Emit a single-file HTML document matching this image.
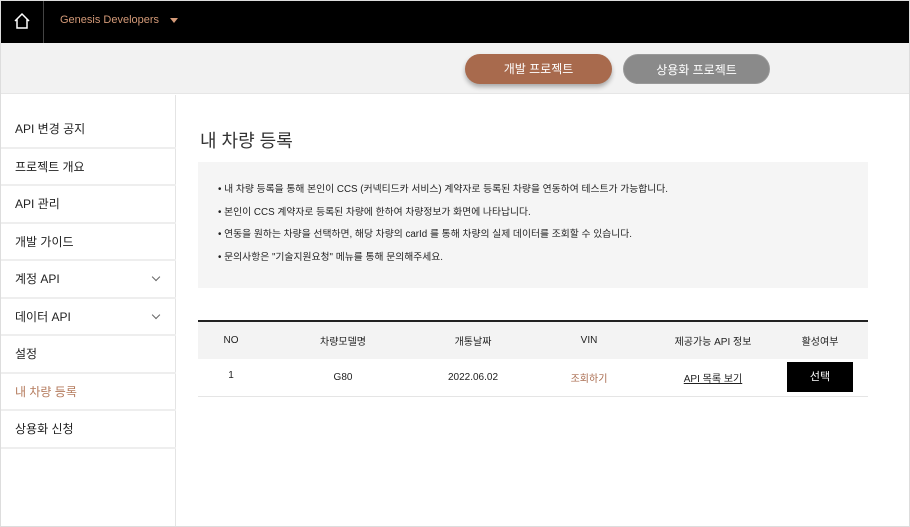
<!DOCTYPE html>
<html><head><meta charset="utf-8"><style>
*{margin:0;padding:0;box-sizing:border-box}
body{width:910px;height:527px;overflow:hidden;background:#fff;font-family:"Liberation Sans","Noto Sans CJK KR",sans-serif;color:#222;position:relative}
.frame{position:absolute;left:0;top:0;width:910px;height:527px;border:1px solid #ddd;pointer-events:none}
.hdr{position:absolute;left:0;top:0;width:910px;height:43px;background:#000}
.home{position:absolute;left:0;top:0;width:44px;height:43px;border-right:1px solid #444}
.brand{position:absolute;left:60px;top:14px;font-size:11px;color:#d49a78}
.caret{position:absolute;left:170px;top:18px;border-left:4px solid transparent;border-right:4px solid transparent;border-top:5px solid #d49a78}
.band{position:absolute;left:0;top:43px;width:910px;height:51px;background:#f2f2f2;border-bottom:1px solid #e6e6e6}
.btn{position:absolute;top:54px;height:30px;border-radius:15px;color:#fff;font-size:12px;text-align:center;line-height:30px}
.b1{left:465px;width:147px;background:#a86a4d;box-shadow:0 3px 5px rgba(0,0,0,.3)}
.b2{left:623px;width:147px;background:#8a8a8a;border:1px solid #999}
.side{position:absolute;left:0;top:95px;width:176px;height:432px;border-right:1px solid #e4e4e4}
.it{position:absolute;left:0;width:176px;height:37.5px;border-bottom:2px solid #eee;font-size:12px;padding-left:15px;line-height:37px}
.it .ch{position:absolute;right:17px;top:13px;width:6px;height:6px;border-right:1px solid #666;border-bottom:1px solid #666;transform:rotate(45deg)}
h1{position:absolute;left:200px;top:127px;font-size:18px;font-weight:normal;color:#333}
.info{position:absolute;left:198px;top:162px;width:670px;height:126px;background:#f5f5f5;font-size:9.8px;color:#222;padding:19px 0 0 20px}
.info p{height:22.5px}
table{position:absolute;left:198px;top:320px;width:670px;border-collapse:collapse;border-top:2px solid #222;font-size:10px;text-align:center;table-layout:fixed}
th{font-weight:normal;height:38px;background:#f3f3f3}
td{height:37px;border-bottom:1px solid #e5e5e5}
.sel{display:inline-block;width:66px;height:30px;background:#000;color:#fff;line-height:30px;font-size:11px}
</style></head><body>
<div class="hdr"><div class="home"><svg width="44" height="43" viewBox="0 0 44 43"><path d="M15 21 L22 14 L29 21 M17 19 V28 H27 V19" fill="none" stroke="#fff" stroke-width="1.5"/></svg></div>
<div class="brand">Genesis Developers</div><div class="caret"></div></div>
<div class="band"></div>
<div class="btn b1">개발 프로젝트</div><div class="btn b2">상용화 프로젝트</div>
<div class="side">
<div class="it" style="top:16px">API 변경 공지</div>
<div class="it" style="top:53.5px">프로젝트 개요</div>
<div class="it" style="top:91px">API 관리</div>
<div class="it" style="top:128.5px">개발 가이드</div>
<div class="it" style="top:166px">계정 API<span class="ch"></span></div>
<div class="it" style="top:203.5px">데이터 API<span class="ch"></span></div>
<div class="it" style="top:241px">설정</div>
<div class="it" style="top:278.5px;color:#b47a5c">내 차량 등록</div>
<div class="it" style="top:316px">상용화 신청</div>
</div>
<h1>내 차량 등록</h1>
<div class="info">
<p>• 내 차량 등록을 통해 본인이 CCS (커넥티드카 서비스) 계약자로 등록된 차량을 연동하여 테스트가 가능합니다.</p>
<p>• 본인이 CCS 계약자로 등록된 차량에 한하여 차량정보가 화면에 나타납니다.</p>
<p>• 연동을 원하는 차량을 선택하면, 해당 차량의 carId 를 통해 차량의 실제 데이터를 조회할 수 있습니다.</p>
<p>• 문의사항은 "기술지원요청" 메뉴를 통해 문의해주세요.</p>
</div>
<table>
<colgroup><col style="width:66px"><col style="width:158px"><col style="width:102px"><col style="width:130px"><col style="width:118px"><col style="width:96px"></colgroup>
<tr><th>NO</th><th>차량모델명</th><th>개통날짜</th><th>VIN</th><th>제공가능 API 정보</th><th>활성여부</th></tr>
<tr><td style="vertical-align:top;padding-top:11px">1</td><td>G80</td><td>2022.06.02</td><td style="color:#a86a4d">조회하기</td><td><span style="text-decoration:underline">API 목록 보기</span></td><td><span class="sel">선택</span></td></tr>
</table>
<div class="frame"></div>
</body></html>
